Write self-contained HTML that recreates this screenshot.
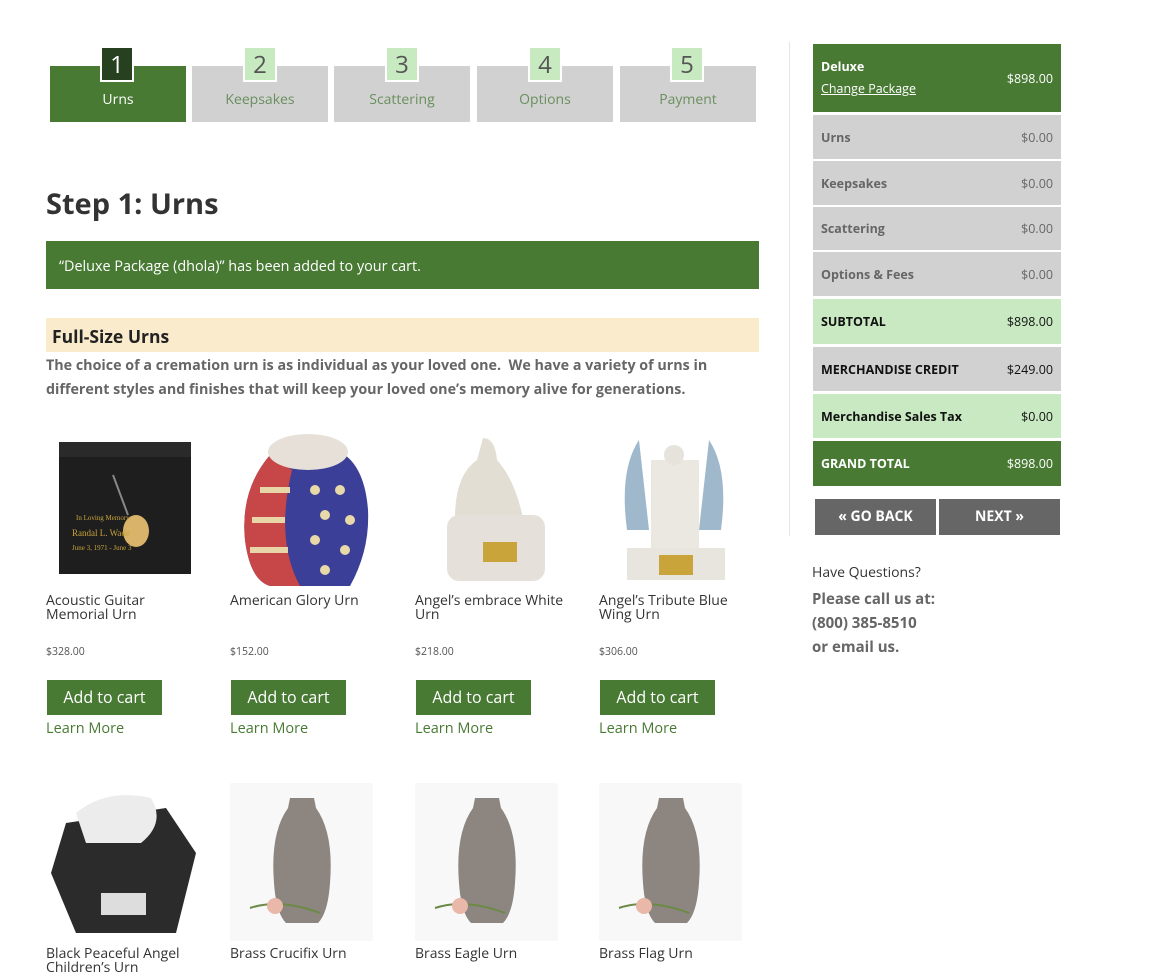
<!DOCTYPE html>
<html><head><meta charset="utf-8"><style>
*{box-sizing:border-box;margin:0;padding:0}
body{width:1156px;height:977px;overflow:hidden;background:#fff;font-family:"Open Sans","Liberation Sans",sans-serif;color:#333;position:relative}
.a{position:absolute}
.tab{position:absolute;top:66px;width:136px;height:56px;background:#d1d1d1;color:#6a8f5e;font-size:14px;text-align:center;padding-top:24px}
.tab.on{background:#487a34;color:#fff}
.num{position:absolute;top:48px;width:34px;height:34px;background:#c8eac1;color:#555;font-size:24px;text-align:center;line-height:34px;border:2px solid #fff;border-top:none}
.num.on{background:#27401f;color:#fff}
.row{position:absolute;left:813px;width:248px;display:flex;justify-content:space-between;align-items:center;padding:0 8px;font-size:12.5px}
.g{background:#d1d1d1;color:#666}.g b{color:#666}
.lg{background:#c8e9c1;color:#111}
.dg{background:#487a34;color:#fff}
.p{position:absolute;font-size:14px;line-height:14px;color:#333}
.pr{position:absolute;font-size:10.5px;color:#555}
.btn{position:absolute;width:115px;height:35px;background:#487a34;color:#fff;font-size:16px;text-align:center;line-height:35px}
.lm{position:absolute;font-size:14.5px;color:#487a34}
</style></head><body>
<div class="tab on" style="left:50px">Urns</div><div class="num on" style="left:100px">1</div>
<div class="tab" style="left:192px">Keepsakes</div><div class="num" style="left:243px">2</div>
<div class="tab" style="left:334px">Scattering</div><div class="num" style="left:385px">3</div>
<div class="tab" style="left:477px">Options</div><div class="num" style="left:528px">4</div>
<div class="tab" style="left:620px">Payment</div><div class="num" style="left:670px">5</div>

<div class="a" style="left:46px;top:184px;font-size:29px;font-weight:bold;color:#333">Step 1: Urns</div>
<div class="a" style="left:46px;top:241px;width:713px;height:48px;background:#487a34;color:#fff;font-size:14.4px;padding:16px 0 0 13px">“Deluxe Package (dhola)” has been added to your cart.</div>
<div class="a" style="left:46px;top:318px;width:713px;height:34px;background:#f9ebcc;font-size:17.5px;font-weight:bold;padding:7px 0 0 6px;color:#222">Full-Size Urns</div>
<div class="a" style="left:46px;top:354px;width:700px;font-size:14.3px;font-weight:bold;color:#666;line-height:24px">The choice of a cremation urn is as individual as your loved one.&nbsp; We have a variety of urns in different styles and finishes that will keep your loved one’s memory alive for generations.</div>

<svg class="a" style="left:46px;top:430px" width="150" height="156"><rect x="13" y="12" width="132" height="132" fill="#1e1e1e"/><rect x="13" y="12" width="132" height="15" fill="#2a2a2a"/><line x1="67" y1="45" x2="82" y2="85" stroke="#888" stroke-width="2"/><ellipse cx="90" cy="101" rx="13" ry="16" fill="#d9b36a"/><text x="30" y="90" font-size="7" fill="#c9a43a" font-family="Liberation Serif">In Loving Memory</text><text x="26" y="106" font-size="9" fill="#c9a43a" font-family="Liberation Serif">Randal L. Wade</text><text x="26" y="120" font-size="7" fill="#c9a43a" font-family="Liberation Serif">June 3, 1971 - June 3</text></svg>
<svg class="a" style="left:230px;top:430px" width="150" height="156"><path d="M40 25 Q10 60 15 110 Q20 150 40 156 L120 156 Q140 120 138 80 Q135 40 115 25Z" fill="#3c3f97"/><path d="M40 25 Q10 60 15 110 Q20 150 40 156 L70 156 Q45 110 62 40Z" fill="#c74748"/><path d="M30 60 L60 60 M22 90 L55 90 M20 120 L58 120" stroke="#e8d5a8" stroke-width="6"/><ellipse cx="78" cy="22" rx="40" ry="18" fill="#e7e0d8"/><g fill="#e8d9a8"><circle cx="85" cy="60" r="5"/><circle cx="110" cy="60" r="5"/><circle cx="95" cy="85" r="5"/><circle cx="120" cy="90" r="5"/><circle cx="85" cy="110" r="5"/><circle cx="115" cy="120" r="5"/><circle cx="95" cy="140" r="5"/></g></svg>
<svg class="a" style="left:415px;top:430px" width="150" height="156"><path d="M68 8 Q80 8 82 30 Q100 50 108 88 L40 88 Q40 45 62 30Z" fill="#e3ded3"/><rect x="32" y="85" width="98" height="66" rx="12" fill="#e5e1da"/><rect x="68" y="112" width="34" height="20" fill="#c9a43a"/></svg>
<svg class="a" style="left:599px;top:430px" width="150" height="156"><path d="M40 10 Q20 40 28 100 L50 100 Z M110 10 Q130 40 122 100 L100 100Z" fill="#9fb8cc"/><rect x="52" y="30" width="48" height="110" fill="#ebe8e2"/><rect x="28" y="118" width="98" height="32" fill="#e8e5df"/><rect x="60" y="125" width="34" height="20" fill="#c9a43a"/><circle cx="75" cy="25" r="10" fill="#e6e2dc"/></svg>

<div class="p" style="left:46px;top:594px">Acoustic Guitar<br>Memorial Urn</div>
<div class="p" style="left:230px;top:594px">American Glory Urn</div>
<div class="p" style="left:415px;top:594px">Angel’s embrace White<br>Urn</div>
<div class="p" style="left:599px;top:594px">Angel’s Tribute Blue<br>Wing Urn</div>
<div class="pr" style="left:46px;top:645px">$328.00</div>
<div class="pr" style="left:230px;top:645px">$152.00</div>
<div class="pr" style="left:415px;top:645px">$218.00</div>
<div class="pr" style="left:599px;top:645px">$306.00</div>
<div class="btn" style="left:47px;top:680px">Add to cart</div>
<div class="btn" style="left:231px;top:680px">Add to cart</div>
<div class="btn" style="left:416px;top:680px">Add to cart</div>
<div class="btn" style="left:600px;top:680px">Add to cart</div>
<div class="lm" style="left:46px;top:719px">Learn More</div>
<div class="lm" style="left:230px;top:719px">Learn More</div>
<div class="lm" style="left:415px;top:719px">Learn More</div>
<div class="lm" style="left:599px;top:719px">Learn More</div>

<svg class="a" style="left:46px;top:783px" width="155" height="158"><path d="M20 40 L120 25 L150 70 L130 150 L30 150 L5 90Z" fill="#2b2b2b"/><path d="M30 30 Q60 5 105 15 Q120 40 95 60 L40 60Z" fill="#ececec"/><rect x="55" y="110" width="45" height="22" fill="#ddd"/></svg>
<div class="a" style="left:230px;top:783px;width:143px;height:158px;background:#f8f8f8"></div>
<div class="a" style="left:415px;top:783px;width:143px;height:158px;background:#f8f8f8"></div>
<div class="a" style="left:599px;top:783px;width:143px;height:158px;background:#f8f8f8"></div>
<svg class="a" style="left:230px;top:783px" width="143" height="158"><path d="M60 15 L84 15 L86 25 Q104 50 100 100 Q98 130 88 140 L56 140 Q46 130 44 100 Q40 50 58 25Z" fill="#8d8680"/><path d="M20 125 Q50 115 90 130" stroke="#6b8a45" stroke-width="2" fill="none"/><circle cx="45" cy="123" r="8" fill="#e9b8a8"/></svg>
<svg class="a" style="left:415px;top:783px" width="143" height="158"><path d="M60 15 L84 15 L86 25 Q104 50 100 100 Q98 130 88 140 L56 140 Q46 130 44 100 Q40 50 58 25Z" fill="#8d8680"/><path d="M20 125 Q50 115 90 130" stroke="#6b8a45" stroke-width="2" fill="none"/><circle cx="45" cy="123" r="8" fill="#e9b8a8"/></svg>
<svg class="a" style="left:599px;top:783px" width="143" height="158"><path d="M60 15 L84 15 L86 25 Q104 50 100 100 Q98 130 88 140 L56 140 Q46 130 44 100 Q40 50 58 25Z" fill="#8d8680"/><path d="M20 125 Q50 115 90 130" stroke="#6b8a45" stroke-width="2" fill="none"/><circle cx="45" cy="123" r="8" fill="#e9b8a8"/></svg>
<div class="p" style="left:46px;top:947px">Black Peaceful Angel<br>Children’s Urn</div>
<div class="p" style="left:230px;top:947px">Brass Crucifix Urn</div>
<div class="p" style="left:415px;top:947px">Brass Eagle Urn</div>
<div class="p" style="left:599px;top:947px">Brass Flag Urn</div>

<div class="a" style="left:789px;top:42px;width:1px;height:494px;background:#e5e5e5"></div>
<div class="a dg" style="left:813px;top:44px;width:248px;height:68px;padding:14px 8px;font-size:12.5px;color:#fff"><b>Deluxe</b><br><span style="text-decoration:underline;line-height:28px">Change Package</span><span style="position:absolute;right:8px;top:26px">$898.00</span></div>
<div class="row g" style="top:115px;height:44px"><b>Urns</b><span>$0.00</span></div>
<div class="row g" style="top:161px;height:44px"><b>Keepsakes</b><span>$0.00</span></div>
<div class="row g" style="top:207px;height:43px"><b>Scattering</b><span>$0.00</span></div>
<div class="row g" style="top:252px;height:44px"><b>Options &amp; Fees</b><span>$0.00</span></div>
<div class="row lg" style="top:299px;height:45px"><b>SUBTOTAL</b><span>$898.00</span></div>
<div class="row g" style="top:347px;height:44px;color:#111"><b style="color:#111">MERCHANDISE CREDIT</b><span>$249.00</span></div>
<div class="row lg" style="top:394px;height:44px"><b>Merchandise Sales Tax</b><span>$0.00</span></div>
<div class="row dg" style="top:441px;height:45px"><b>GRAND TOTAL</b><span>$898.00</span></div>
<div class="a" style="left:815px;top:499px;width:121px;height:36px;background:#666;color:#fff;font-weight:bold;font-size:14px;text-align:center;line-height:36px">« GO BACK</div>
<div class="a" style="left:939px;top:499px;width:121px;height:36px;background:#666;color:#fff;font-weight:bold;font-size:14px;text-align:center;line-height:36px">NEXT »</div>
<div class="a" style="left:812px;top:563px;font-size:14px;color:#333">Have Questions?</div>
<div class="a" style="left:812px;top:587px;font-size:15px;font-weight:bold;color:#666;line-height:24px">Please call us at:<br>(800) 385-8510<br>or email us.</div>
</body></html>
